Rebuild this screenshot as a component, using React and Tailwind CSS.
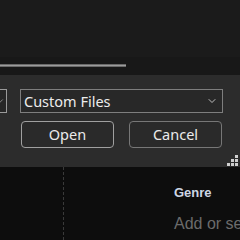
import { ChevronDown } from 'lucide-react';

const Grip = () => (
    <svg className="absolute right-[2px] bottom-[1px]" width="11" height="11" viewBox="0 0 11 11">
        {[[8, 0], [4, 4], [8, 4], [0, 8], [4, 8], [8, 8]].map(([x, y], i) => (
            <rect key={i} x={x} y={y} width="3" height="3" fill="#cfcfcf" />
        ))}
    </svg>
);

const App = () => {
    return (
        <div className="w-[240px] h-[240px] overflow-hidden bg-[#0d0d0d] flex flex-col font-['Noto_Sans',sans-serif]">
            {/* top strip with slider */}
            <div className="h-[75px] shrink-0 bg-[#1b1b1b] flex flex-col justify-end">
                <div className="h-[18px] bg-[#181818] pt-[7px]">
                    <div className="w-[126px] h-[3px] bg-[#9c9c9c] border-y border-[#6a6a6a]" />
                </div>
            </div>

            {/* file dialog footer */}
            <div className="relative h-[92px] shrink-0 bg-[#2c2c2c] pt-[14px]">
                <div className="flex items-center gap-[13px] ml-[-34px]">
                    <div className="w-[41px] h-[24px] shrink-0 border border-[#9a9a9a] bg-[#262626] flex items-center justify-end pr-[1px]">
                        <ChevronDown size={10} color="#9a9a9a" strokeWidth={2} />
                    </div>
                    <div className="w-[203px] h-[24px] shrink-0 border border-[#7e7e7e] bg-[#282828] flex items-center justify-between pl-[3px] pr-[4px]">
                        <span className="text-[14.5px] leading-none text-[#ececec]">Custom Files</span>
                        <ChevronDown size={12} color="#bdbdbd" strokeWidth={2} />
                    </div>
                </div>
                <div className="flex gap-[15px] mt-[8px] ml-[21px]">
                    <button className="w-[93px] h-[27px] rounded-[4px] border border-[#a0a0a0] bg-[#2a2a2a] text-[14.5px] text-[#eaeaea] flex items-center justify-center">
                        Open
                    </button>
                    <button className="w-[93px] h-[27px] rounded-[4px] border border-[#777] bg-[#2a2a2a] text-[14.5px] text-[#eaeaea] flex items-center justify-center">
                        Cancel
                    </button>
                </div>
                <Grip />
            </div>

            {/* panel behind */}
            <div className="flex-1 flex font-['Liberation_Sans',Arial,sans-serif]">
                <div className="w-[64px] shrink-0 border-r border-dashed border-[#3a3a3a]" />
                <div className="flex-1 min-w-0 pl-[110px] pt-[18px] whitespace-nowrap">
                    <div className="text-[13px] font-bold text-[#cdd6e4] leading-[15px]">Genre</div>
                    <div className="mt-[15px] text-[16px] text-[#6b6b6b] leading-[18px]">Add or select</div>
                </div>
            </div>
        </div>
    );
};

export default App;
